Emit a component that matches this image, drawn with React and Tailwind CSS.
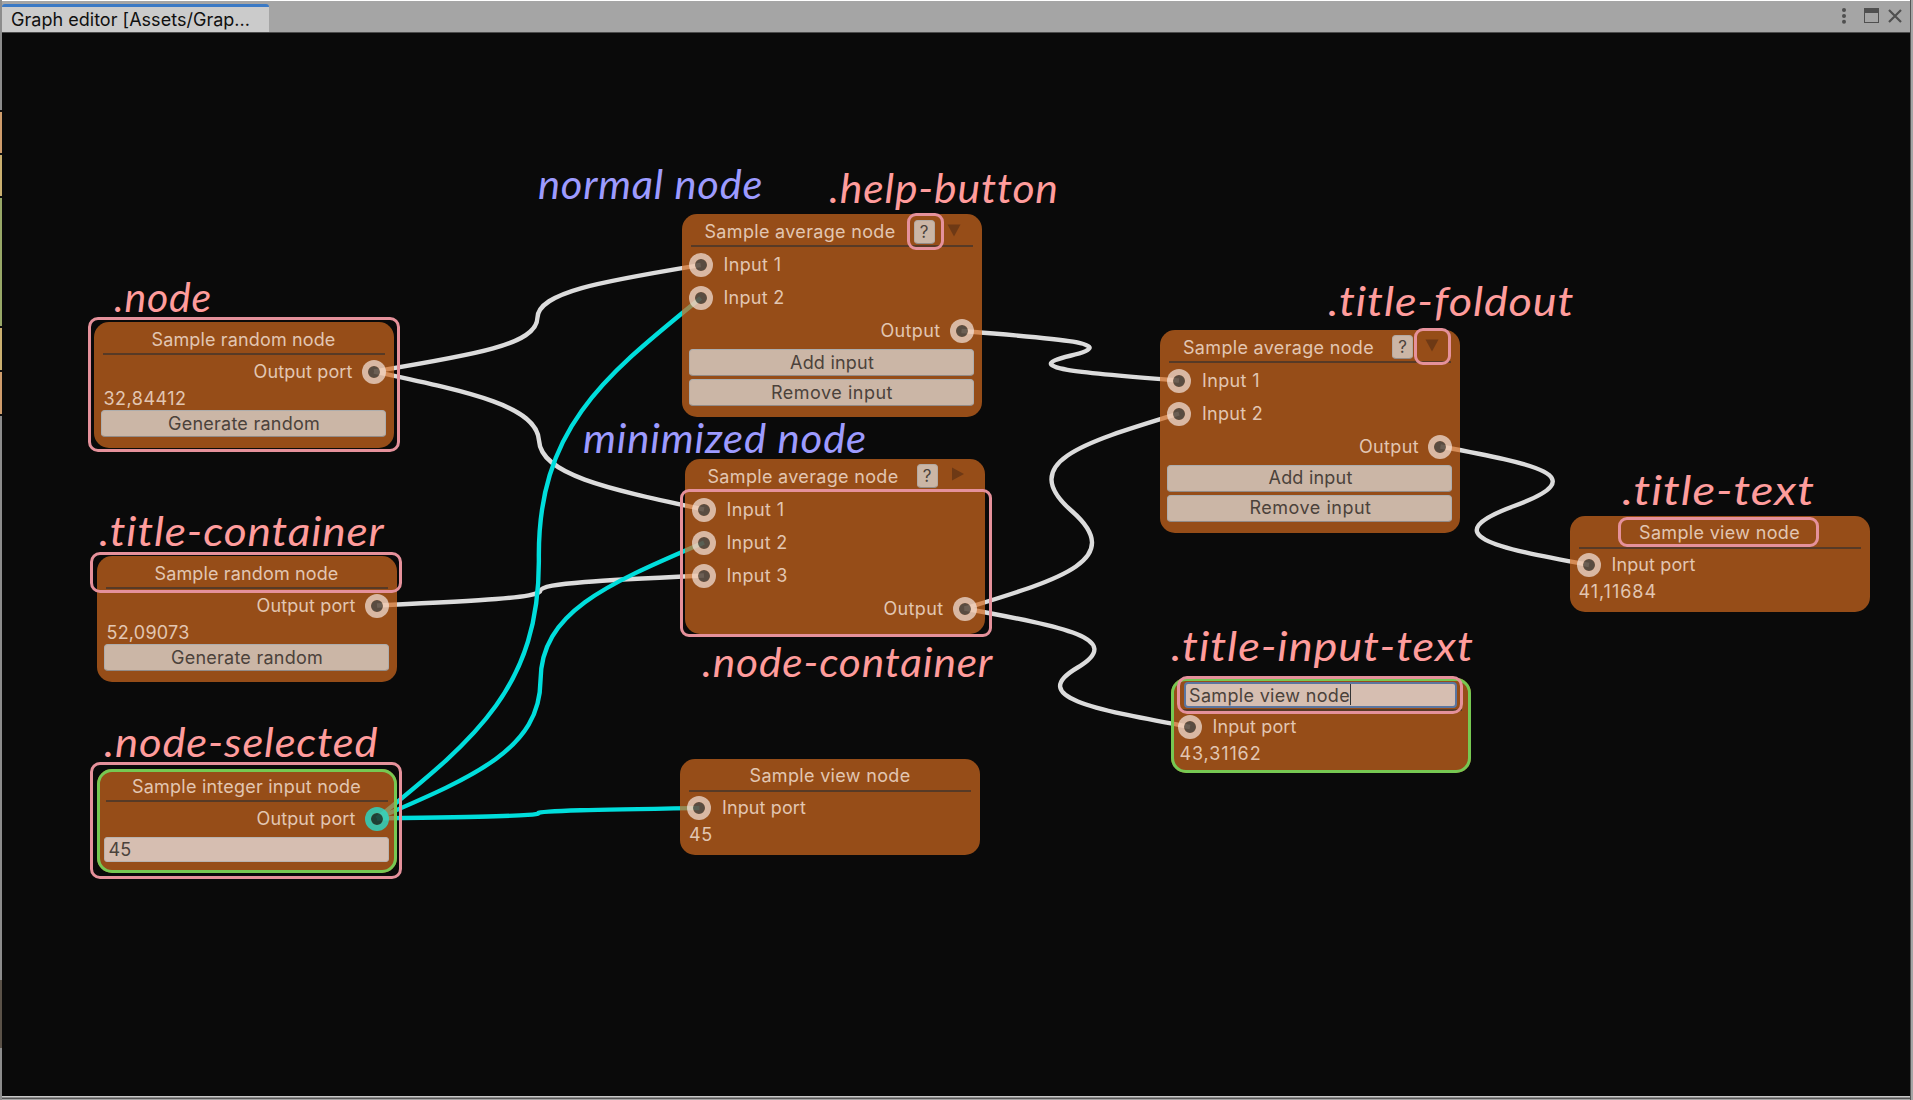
import { useLayoutEffect, useRef, useState } from "react";

const C1 = 96;

/* Two mirrored cubic halves that meet in the middle of the connection. */
function wirePath([x0, y0], [x1, y1], c2 = 163) {
  const dy = y1 - y0;
  const mx = (x0 + x1) / 2;
  const my = (y0 + y1) / 2;
  return `M${x0} ${y0} C${x0 + C1} ${y0 + dy * 0.15} ${x0 + c2} ${y0 + dy * 0.25} ${mx} ${my} C${x1 - c2} ${y1 - dy * 0.25} ${x1 - C1} ${y1 - dy * 0.15} ${x1} ${y1}`;
}

const WIRES = [
  { from: [374, 371.5], to: [700.7, 265] },
  { from: [374, 371.5], to: [704, 509.5] },
  { from: [377, 605.5], to: [704, 575.5] },
  { from: [961.5, 331], to: [1179, 380.5] },
  { from: [964.5, 608.5], to: [1179, 413.5] },
  { from: [964.5, 608.5], to: [1190, 727] },
  { from: [1440.5, 446.5], to: [1589, 565], c2: 155 },
  { from: [377, 818.5], to: [700.7, 298], on: true },
  { from: [377, 818.5], to: [704, 542.5], on: true },
  { from: [377, 818.5], to: [699.5, 808], on: true },
];

function Wires() {
  return (
    <svg className="absolute left-0 top-0 h-[1100px] w-[1913px]" fill="none" strokeWidth="4.4">
      {WIRES.map((w, i) => (
        <path key={i} d={wirePath(w.from, w.to, w.c2)} stroke={w.on ? "#00dedc" : "#dcdcdc"} />
      ))}
    </svg>
  );
}

/* One line of text whose tracking is set so that it fills the given width. */
function Fit({ width, children, className = "" }) {
  const ref = useRef(null);
  const [spacing, setSpacing] = useState(0);
  useLayoutEffect(() => {
    const natural = ref.current.getBoundingClientRect().width;
    setSpacing((width - natural) / children.length);
  }, [width, children]);
  return (
    <span ref={ref} className={`inline-block whitespace-pre ${className}`} style={{ letterSpacing: spacing }}>
      {children}
    </span>
  );
}

/* One line of text stretched sideways to the given width. */
function Stretch({ width, children }) {
  const ref = useRef(null);
  const [scale, setScale] = useState(1);
  useLayoutEffect(() => {
    setScale(width / ref.current.offsetWidth);
  }, [width, children]);
  return (
    <span
      ref={ref}
      className="inline-block origin-left tracking-[0.8px] whitespace-pre [font-variant-ligatures:none]"
      style={{ transform: `scaleX(${scale})` }}
    >
      {children}
    </span>
  );
}

function Port({ on }) {
  return (
    <span
      className={`size-6 shrink-0 rounded-full border-6 ${
        on ? "border-[#27dcca]/80 bg-[#003c3c]/80" : "border-[#f5e6de]/70 bg-[#3e4b53]/70"
      } bg-clip-padding`}
    />
  );
}

function InputRow({ label, width, className = "h-[33px]" }) {
  return (
    <div className={`flex items-center gap-[11px] pl-[7px] ${className}`}>
      <Port />
      <Fit width={width}>{label}</Fit>
    </div>
  );
}

function OutputRow({ label, width, on, className = "h-[33px]" }) {
  return (
    <div className={`flex items-center justify-end gap-[9px] pr-[8px] ${className}`}>
      <Fit width={width}>{label}</Fit>
      <Port on={on} />
    </div>
  );
}

function Button({ label, width }) {
  return (
    <button className="ml-[7px] mr-[8px] flex h-[27px] items-center justify-center rounded-[4px] border border-[#adadad] border-b-[#938b87] bg-[#cbb6a6] pl-[2px] text-[#4b423b]">
      <Fit width={width}>{label}</Fit>
    </button>
  );
}

function Node({ x, y, h, title, titleWidth, selected, children, header }) {
  return (
    <section
      className="absolute flex w-[300px] flex-col rounded-[15px] bg-[#d2691e]/70 text-[18px] leading-[22px] font-[370] text-[#e2c6b2]"
      style={{ left: x, top: y, height: h }}
    >
      {selected && <div className="pointer-events-none absolute inset-0 rounded-[15px] border-3 border-[#76c852]" />}
      <div className="mx-[9px] flex h-[33px] shrink-0 items-center justify-center border-b-2 border-[#573a26] pt-[4px]">
        {header ?? <Fit width={titleWidth}>{title}</Fit>}
      </div>
      {children}
    </section>
  );
}

function AverageHeader({ closed }) {
  return (
    <div className="flex w-full items-center pl-[14px]">
      <Fit width={191} className="mt-px">Sample average node</Fit>
      <span className="ml-[18px] flex h-6 w-[21px] items-center justify-center rounded-[4px] border border-[#b3aaa3] border-b-[#938b87] bg-[#cbb6a6] text-[17px] text-[#4b423b]">
        ?
      </span>
      <svg className="ml-[12px] size-[14px] -translate-y-[2px]" viewBox="0 0 14 14" fill="#6e3915">
        {closed ? <path d="M2 0.5 14 7 2 13.5Z" /> : <path d="M0.5 1.5H13.5L7 13.5Z" />}
      </svg>
    </div>
  );
}

function RandomNode({ x, y, value }) {
  return (
    <Node x={x} y={y} h={126} title="Sample random node" titleWidth={184}>
      <OutputRow label="Output port" width={99} className="mt-px h-8" />
      <div className="flex h-[22px] items-center pl-[10px]">
        <Fit width={83}>{value}</Fit>
      </div>
      <Button label="Generate random" width={152} />
    </Node>
  );
}

function AverageNode({ x, y }) {
  return (
    <Node x={x} y={y} h={203} header={<AverageHeader />}>
      <div className="mt-[1.5px]">
        <InputRow label="Input 1" width={58} />
        <InputRow label="Input 2" width={61} />
        <OutputRow label="Output" width={60} />
      </div>
      <div className="mt-[1.5px] flex flex-col gap-[3px]">
        <Button label="Add input" width={84} />
        <Button label="Remove input" width={122} />
      </div>
    </Node>
  );
}

function ViewNode({ x, y, h = 96, value, valueWidth, header, selected }) {
  return (
    <Node x={x} y={y} h={h} title="Sample view node" titleWidth={161} header={header} selected={selected}>
      <InputRow label="Input port" width={84} className="h-8" />
      <div className="flex h-[22px] items-center pl-[9px]">
        <Fit width={valueWidth}>{value}</Fit>
      </div>
    </Node>
  );
}

function Frame({ className }) {
  return <div className={`pointer-events-none absolute border-3 border-[#e5919b] ${className}`} />;
}

const NOTES = [
  [".node", 114, 312, 98],
  [".title-container", 99, 546, 286],
  [".node-selected", 104, 757, 274],
  [".help-button", 829, 203, 230],
  [".node-container", 702, 677, 291],
  [".title-foldout", 1328, 316, 246],
  [".title-input-text", 1171, 661, 303],
  [".title-text", 1622, 505, 193],
  ["normal node", 538, 199, 225, true],
  ["minimized node", 583, 453, 284, true],
];

function Notes() {
  return NOTES.map(([text, x, base, width, purple]) => (
    <div
      key={text}
      className={`absolute font-[Lato,sans-serif] text-[41px] leading-[48px] font-normal italic ${purple ? "text-[#9d9bff]" : "text-[#ff9c9c]"}`}
      style={{ left: x, top: base - 39 }}
    >
      <Stretch width={width}>{text}</Stretch>
    </div>
  ));
}

function TitleBar() {
  return (
    <header className="flex h-8 shrink-0 items-end justify-between rounded-tr-[4px] border-b border-[#4c4c4c] bg-[#a5a5a5]">
      <div className="flex h-7 w-[267px] items-center rounded-t-[3px] border-t-3 border-[#3a79c5] bg-[#cbcbcb] pl-[9px] text-[18px] leading-[22px] font-[370] text-[#101010]">
        <Fit width={239}>Graph editor [Assets/Grap...</Fit>
      </div>
      <div className="flex h-full items-center gap-[9px] pr-[8px] pb-[2px] text-[#4f4f4f]">
        <svg className="mr-[9px] h-4 w-1" viewBox="0 0 4 16" fill="currentColor">
          <circle cx="2" cy="2" r="2" />
          <circle cx="2" cy="8" r="2" />
          <circle cx="2" cy="13.7" r="2" />
        </svg>
        <svg className="h-[15px] w-[15px]" viewBox="0 0 15 15" fill="none" stroke="currentColor">
          <path d="M0.5 2.5H14.5" strokeWidth="5" />
          <rect x="0.5" y="0.5" width="14" height="14" />
        </svg>
        <svg className="h-[14px] w-[14px]" viewBox="0 0 14 14" stroke="currentColor" strokeWidth="2.2">
          <path d="M1 1 13 13M13 1 1 13" />
        </svg>
      </div>
    </header>
  );
}

export default function App() {
  return (
    <div className="relative flex h-[1100px] w-[1913px] overflow-hidden bg-[#a5a5a5] font-[Inter,sans-serif]">
      <div className="flex w-[2px] shrink-0 flex-col bg-[#8c8c8c]">
        <div className="h-[112px] border-b-2 border-[#111111]" />
        <div className="h-[43px] border-b-2 border-[#111111] bg-[#cf9d6c]" />
        <div className="h-[43px] border-b-2 border-[#111111] bg-[#cbb070]" />
        <div className="h-[130px] border-b-2 border-[#111111] bg-[#98a868]" />
        <div className="h-[44px] border-b-2 border-[#111111] bg-[#cbb070]" />
        <div className="h-[44px] border-b-2 border-[#111111] bg-[#cf9d6c]" />
        <div className="mt-[564px] h-[68px] bg-[#5b5248]" />
      </div>
      <div className="flex w-[1908px] flex-col border-t border-white">
        <TitleBar />
        <main className="h-[1063px] bg-[#0a0a0a]" />
        <div className="h-px bg-[#c9c9c9]" />
        <div className="h-px bg-[#8d8d8d]" />
        <div className="h-px bg-[#555555]" />
      </div>
      <div className="w-px bg-[#555555]" />

      <Wires />

      <RandomNode x={93.5} y={322} value="32,84412" />
      <RandomNode x={96.5} y={556} value="52,09073" />
      <Node x={96.5} y={769} h={104} title="Sample integer input node" titleWidth={229} selected>
        <OutputRow label="Output port" width={99} className="mt-px h-8" on />
        <div className="ml-[7px] mr-[8px] mt-[2px] flex h-[25px] items-center rounded-[3px] border border-[#b9b3af] bg-[#d6beb1] pl-[4px] pt-px text-[#4b423b]">
          <Fit width={23}>45</Fit>
        </div>
      </Node>

      <AverageNode x={681.5} y={214} />
      <Node x={684.5} y={458.5} h={175.5} header={<AverageHeader closed />}>
        <div className="mt-[1.5px]">
          <InputRow label="Input 1" width={58} />
          <InputRow label="Input 2" width={61} />
          <InputRow label="Input 3" width={61} />
          <OutputRow label="Output" width={60} />
        </div>
      </Node>
      <ViewNode x={680} y={758.5} value="45" valueWidth={24} />
      <AverageNode x={1160} y={329.5} />
      <ViewNode
        x={1170.5}
        y={678}
        h={95}
        value="43,31162"
        valueWidth={82}
        selected
        header={
          <div className="-mt-[2px] flex h-[26px] w-[273px] shrink-0 items-center rounded-[4px] border-2 border-[#5a75a0] bg-[#d6beb1] pl-[3px] text-[#4b423b]">
            <Fit width={161} className="mt-[2px]">Sample view node</Fit>
            <span className="h-[21px] w-px bg-[#333333]" />
          </div>
        }
      />
      <ViewNode x={1569.5} y={515.5} value="41,11684" valueWidth={78.5} />

      <Frame className="left-[88px] top-[317px] h-[135px] w-[312px] rounded-[10px]" />
      <Frame className="left-[90px] top-[552px] h-[41px] w-[312px] rounded-[10px]" />
      <Frame className="left-[90px] top-[762px] h-[117px] w-[312px] rounded-[10px]" />
      <Frame className="left-[907px] top-[213px] h-[37px] w-[37px] rounded-[9px]" />
      <Frame className="left-[680px] top-[489px] h-[148px] w-[312px] rounded-[9px]" />
      <Frame className="left-[1414px] top-[328px] h-[37px] w-[37px] rounded-[9px]" />
      <Frame className="left-[1618px] top-[517px] h-[30px] w-[201px] rounded-[9px]" />
      <Frame className="left-[1177px] top-[676px] h-[38px] w-[286px] rounded-[10px]" />

      <Notes />
    </div>
  );
}
